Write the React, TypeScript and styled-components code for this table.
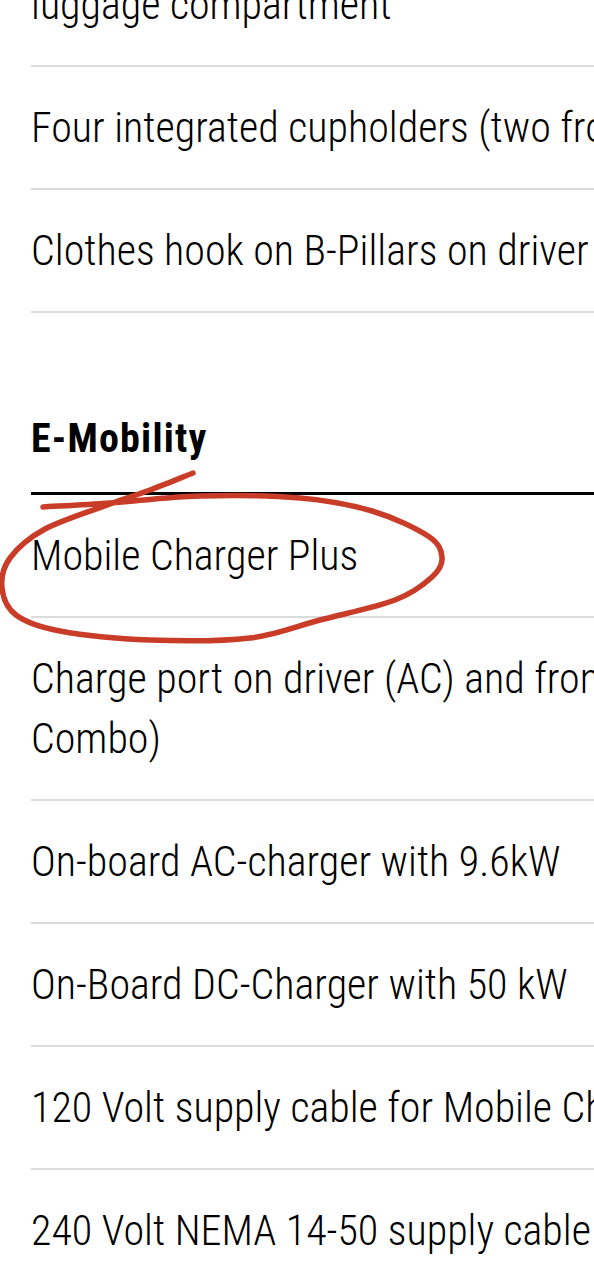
import React from "react";
import styled, { createGlobalStyle } from "styled-components";

const GlobalStyle = createGlobalStyle`
  html, body {
    margin: 0;
    padding: 0;
    background: #ffffff;
    overflow: hidden;
  }
  body {
    font-family: "Roboto", "Open Sans", sans-serif;
    color: #000000;
  }
`;

const Page = styled.main`
  width: 900px;
  padding-left: 31px;
  margin-top: -116px;
`;

const Section = styled.section`
  display: flex;
  flex-direction: column;
`;

const Heading = styled.h2`
  margin: 104px 0 0;
  padding-bottom: 31px;
  border-bottom: 3px solid #000000;
  font-family: "Roboto", sans-serif;
  font-stretch: 75%;
  font-weight: 700;
  font-size: 40px;
  line-height: 44px;
  letter-spacing: 1.2px;
`;

const List = styled.ul`
  list-style: none;
  margin: 0;
  padding: 0;
`;

const Item = styled.li<{ $annotated?: boolean }>`
  position: ${(p) => (p.$annotated ? "relative" : "static")};
  padding: 31px 0 30px;
  border-bottom: 2px solid #dcdcdc;
  font-family: "Roboto", sans-serif;
  font-stretch: 75%;
  font-weight: 300;
  font-size: 42px;
  line-height: 60px;
  white-space: nowrap;
`;

const Annotation = styled.svg`
  position: absolute;
  top: -32px;
  left: -31px;
  width: 460px;
  height: 190px;
  overflow: visible;
  pointer-events: none;
`;

type Pt = [number, number];

function smoothPath(pts: Pt[]): string {
  let d = `M${pts[0][0]},${pts[0][1]}`;
  for (let i = 0; i < pts.length - 1; i++) {
    const p0 = pts[i - 1] || pts[i];
    const p1 = pts[i];
    const p2 = pts[i + 1];
    const p3 = pts[i + 2] || p2;
    const c1x = p1[0] + (p2[0] - p0[0]) / 6;
    const c1y = p1[1] + (p2[1] - p0[1]) / 6;
    const c2x = p2[0] - (p3[0] - p1[0]) / 6;
    const c2y = p2[1] - (p3[1] - p1[1]) / 6;
    d += ` C${c1x.toFixed(1)},${c1y.toFixed(1)} ${c2x.toFixed(1)},${c2y.toFixed(1)} ${p2[0]},${p2[1]}`;
  }
  return d;
}

const strokePoints: Pt[] = [
  [193, 10],
  [150, 27],
  [110, 41],
  [45, 66],
  [10, 95],
  [2, 125],
  [16, 152],
  [60, 168],
  [150, 177],
  [250, 175],
  [320, 157],
  [395, 137],
  [432, 114],
  [442, 94],
  [428, 73],
  [372, 48],
  [300, 35],
  [200, 33],
  [110, 40],
  [43, 44],
];

const RedCircle = () => (
  <Annotation viewBox="0 0 460 190" aria-hidden="true">
    <path
      d={smoothPath(strokePoints)}
      fill="none"
      stroke="#c93d28"
      strokeWidth={5.5}
      strokeLinecap="round"
      strokeLinejoin="round"
    />
  </Annotation>
);

export default function App() {
  return (
    <>
      <GlobalStyle />
      <Page>
        <Section>
          <List>
            <Item>
              Lashing eyes and bag hooks in front and rear
              <br />
              luggage compartment
            </Item>
            <Item>Four integrated cupholders (two front, two rear)</Item>
            <Item>Clothes hook on B-Pillars on driver and passenger side</Item>
          </List>
        </Section>
        <Section>
          <Heading>E-Mobility</Heading>
          <List>
            <Item $annotated>
              Mobile Charger Plus
              <RedCircle />
            </Item>
            <Item>
              Charge port on driver (AC) and front passenger side (AC/DC, CCS
              <br />
              Combo)
            </Item>
            <Item>On-board AC-charger with 9.6kW</Item>
            <Item>On-Board DC-Charger with 50 kW</Item>
            <Item>120 Volt supply cable for Mobile Charger Plus</Item>
            <Item>240 Volt NEMA 14-50 supply cable for Mobile Charger Plus</Item>
          </List>
        </Section>
      </Page>
    </>
  );
}
